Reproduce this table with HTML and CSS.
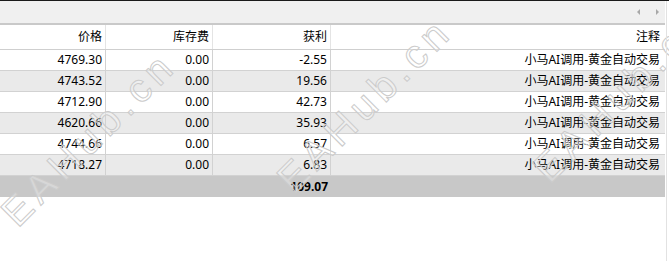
FILE: index.html
```html
<!DOCTYPE html>
<html>
<head>
<meta charset="utf-8">
<link rel="stylesheet" href="styles.css">
</head>
<body>
<div class="frame">
  <div class="topbar">
    <span class="arrow arrow-left"></span>
    <span class="arrow arrow-right"></span>
  </div>
  <div class="sep"></div>
  <div class="table">
    <div class="row head">
      <div class="cell">价格</div>
      <div class="cell">库存费</div>
      <div class="cell">获利</div>
      <div class="cell last">注释</div>
    </div>
    <div class="row">
      <div class="cell">4769.30</div>
      <div class="cell">0.00</div>
      <div class="cell">-2.55</div>
      <div class="cell last">小马AI调用-黄金自动交易</div>
    </div>
    <div class="row alt">
      <div class="cell">4743.52</div>
      <div class="cell">0.00</div>
      <div class="cell">19.56</div>
      <div class="cell last">小马AI调用-黄金自动交易</div>
    </div>
    <div class="row">
      <div class="cell">4712.90</div>
      <div class="cell">0.00</div>
      <div class="cell">42.73</div>
      <div class="cell last">小马AI调用-黄金自动交易</div>
    </div>
    <div class="row alt">
      <div class="cell">4620.66</div>
      <div class="cell">0.00</div>
      <div class="cell">35.93</div>
      <div class="cell last">小马AI调用-黄金自动交易</div>
    </div>
    <div class="row">
      <div class="cell">4744.66</div>
      <div class="cell">0.00</div>
      <div class="cell">6.57</div>
      <div class="cell last">小马AI调用-黄金自动交易</div>
    </div>
    <div class="row alt">
      <div class="cell">4718.27</div>
      <div class="cell">0.00</div>
      <div class="cell">6.83</div>
      <div class="cell last">小马AI调用-黄金自动交易</div>
    </div>
    <div class="row total">
      <div class="cell"></div>
      <div class="cell"></div>
      <div class="cell">109.07</div>
      <div class="cell last"></div>
    </div>
  </div>
  <span class="wm wm1">EAHub.cn</span>
  <span class="wm wm2">EAHub.cn</span>
  <span class="wm wm3">EAHub.cn</span>
</div>
</body>
</html>
```

FILE: styles.css
```css
html, body {
  margin: 0;
  padding: 0;
  background: #ffffff;
}

.frame {
  position: relative;
  width: 669px;
  height: 261px;
  overflow: hidden;
  border-top: 1px solid #1a1a1a;
  box-sizing: border-box;
  font-family: "Noto Sans", "Noto Sans CJK SC", sans-serif;
  font-size: 12px;
  color: #000;
}

.frame::after {
  content: "";
  position: absolute;
  top: 0;
  bottom: 0;
  left: 666px;
  width: 1px;
  background: #e2e2e2;
}

.topbar {
  height: 22px;
  width: 665px;
  background: #f0f0f0;
  display: flex;
  align-items: center;
  padding-left: 637px;
  box-sizing: border-box;
  gap: 16px;
}

.arrow {
  width: 0;
  height: 0;
  border-top: 3px solid transparent;
  border-bottom: 3px solid transparent;
  margin-top: -1px;
}

.arrow-left {
  border-right: 3px solid #a8a8a8;
}

.arrow-right {
  border-left: 3px solid #a8a8a8;
}

.sep {
  height: 2px;
  width: 665px;
  background: #c9c9c9;
}

.table {
  width: 665px;
}

.row {
  display: grid;
  grid-template-columns: 106px 107px 118px 334px;
  height: 21px;
  border-bottom: 1px solid #d2d2d2;
  box-sizing: border-box;
  background: #ffffff;
}

.row.head {
  height: 25px;
  border-bottom: 1px solid #cfcfcf;
}

.row.alt {
  background: #eaeaea;
}

.row.total {
  background: #c8c8c8;
  border-bottom: none;
  font-weight: bold;
}

.cell {
  display: flex;
  align-items: center;
  justify-content: flex-end;
  padding-right: 3px;
  border-right: 1px solid #d2d2d2;
  line-height: 16px;
  white-space: nowrap;
}

.head .cell {
  border-right-color: #e4e4e4;
}

.total .cell {
  border-right: none;
}

.cell.last {
  border-right: none;
  padding-right: 5px;
}

.wm {
  position: absolute;
  font-family: "Liberation Sans", sans-serif;
  font-size: 40px;
  letter-spacing: 6px;
  line-height: 1;
  color: rgba(255, 255, 255, 0.3);
  -webkit-text-stroke: 1px #cbcbcb;
  transform-origin: 0 100%;
  transform: rotate(-45deg);
  white-space: nowrap;
  pointer-events: none;
}

.wm1 {
  left: 22px;
  top: 192px;
}

.wm2 {
  left: 298px;
  top: 158px;
}

.wm3 {
  left: 554px;
  top: 148px;
}
```
